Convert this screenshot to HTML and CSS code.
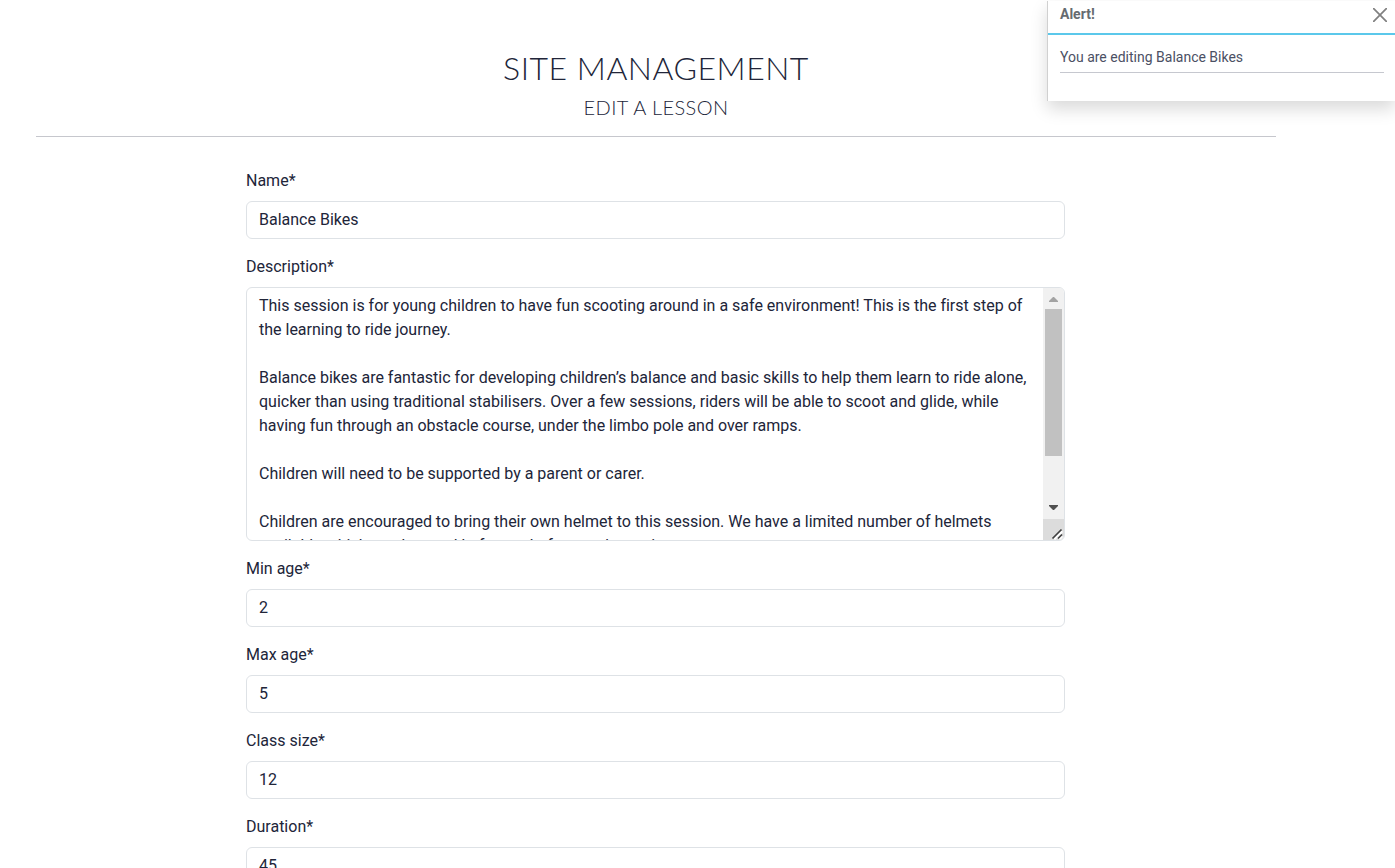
FILE: index.html
```
<!DOCTYPE html>
<html lang="en">
<head>
<meta charset="utf-8">
<title>Site Management</title>
<link rel="stylesheet" href="styles.css">
</head>
<body>
<main class="page">
  <header class="heading">
    <h1 class="title">SITE MANAGEMENT</h1>
    <h2 class="subtitle">EDIT A LESSON</h2>
  </header>
  <form class="form">
    <div class="field"><label class="label">Name*</label><div class="control">Balance Bikes</div></div>
    <div class="field field-area"><label class="label">Description*</label>
      <div class="area">
        <div class="area-text">This session is for young children to have fun scooting around in a safe environment! This is the first step of
the learning to ride journey.

Balance bikes are fantastic for developing children’s balance and basic skills to help them learn to ride alone,
quicker than using traditional stabilisers. Over a few sessions, riders will be able to scoot and glide, while
having fun through an obstacle course, under the limbo pole and over ramps.

Children will need to be supported by a parent or carer.

Children are encouraged to bring their own helmet to this session. We have a limited number of helmets
available which can be used before or before each session.</div>
        <div class="scrollbar">
          <svg class="arrow" width="21" height="21" viewBox="0 0 21 21"><path d="M6 14h9v-1l-4-4h-1l-4 4z" fill="#a3a3a3"/></svg>
          <div class="thumb"></div>
          <svg class="arrow" width="21" height="21" viewBox="0 0 21 21"><path d="M6 7h9v1l-4 4h-1l-4-4z" fill="#505050"/></svg>
          <svg class="grip" width="21" height="21" viewBox="0 0 21 21"><path d="M11 20l8-8M16 20l3-3" stroke="#fff" stroke-width="3"/><path d="M9.500 19.500l9-9M15 19.500l4-4" stroke="#404040" stroke-width="1.700"/></svg>
        </div>
      </div>
    </div>
    <div class="field"><label class="label">Min age*</label><div class="control">2</div></div>
    <div class="field"><label class="label">Max age*</label><div class="control">5</div></div>
    <div class="field"><label class="label">Class size*</label><div class="control">12</div></div>
    <div class="field"><label class="label">Duration*</label><div class="control">45</div></div>
  </form>
</main>
<aside class="toast">
  <div class="toast-head"><strong>Alert!</strong>
    <svg width="14" height="14" viewBox="0 0 14 14"><path d="M.7.700l12.600 12.600M13.300.7L.7 13.300" stroke="#808080" stroke-width="1.700" stroke-linecap="round"/></svg>
  </div>
  <div class="toast-body"><p class="toast-text">You are editing Balance Bikes</p></div>
</aside>
</body>
</html>
```
FILE: styles.css
```
* { box-sizing: border-box; }
html { overflow: hidden; }
body { margin: 0; height: 868px; overflow: hidden; background: #fff; color: #212539; font: 16px/24px Roboto, sans-serif; }
.page { width: 1240px; margin-left: 36px; padding-top: 48px; }
.heading { height: 89px; border-bottom: 1px solid #c6c7cd; text-align: center; font-family: Lato, sans-serif; }
.title { margin: 0; font-size: 32px; line-height: 40px; font-weight: 300; letter-spacing: 0.5px; }
.subtitle { margin: 7px 0 0; font-size: 20px; line-height: 24px; font-weight: 300; letter-spacing: 0.4px; }
.form { width: 819px; margin: 32px 0 0 210px; }
.field { height: 86px; }
.field-area { height: 302px; }
.label { display: block; height: 32px; }
.control { height: 38px; padding: 6px 12px; border: 1px solid #dee2e6; border-radius: 6px; }
.area { display: flex; height: 254px; border: 1px solid #dee2e6; border-radius: 6px; overflow: hidden; }
.area-text { flex: 1; min-width: 0; padding: 6px 0 0 12px; white-space: pre; letter-spacing: -0.003px; }
.scrollbar { display: flex; flex-direction: column; width: 21px; background: #f1f1f1; }
.arrow, .grip { display: block; flex: none; }
.thumb { height: 147px; margin: 0 2px 42px; background: #c1c1c1; }
.grip { background: #dcdcdc; }
.toast { position: absolute; top: 1px; right: 0; width: 348px; height: 100px; background: #fff; border-left: 1px solid #d0d0d0; box-shadow: 0 8px 16px rgba(0,0,0,.15); font-size: 14px; line-height: 21px; }
.toast-head { display: flex; justify-content: space-between; height: 34px; padding: 3px 8px 0 12px; border-bottom: 2px solid #5bc8eb; color: #666b70; }
.toast-head strong { font-weight: 700; }
.toast-head svg { margin-top: 4px; }
.toast-body { padding: 12px 11px 0 12px; }
.toast-text { margin: 0; height: 26px; border-bottom: 1px solid #c6c8cf; color: #4b5064; }
```
